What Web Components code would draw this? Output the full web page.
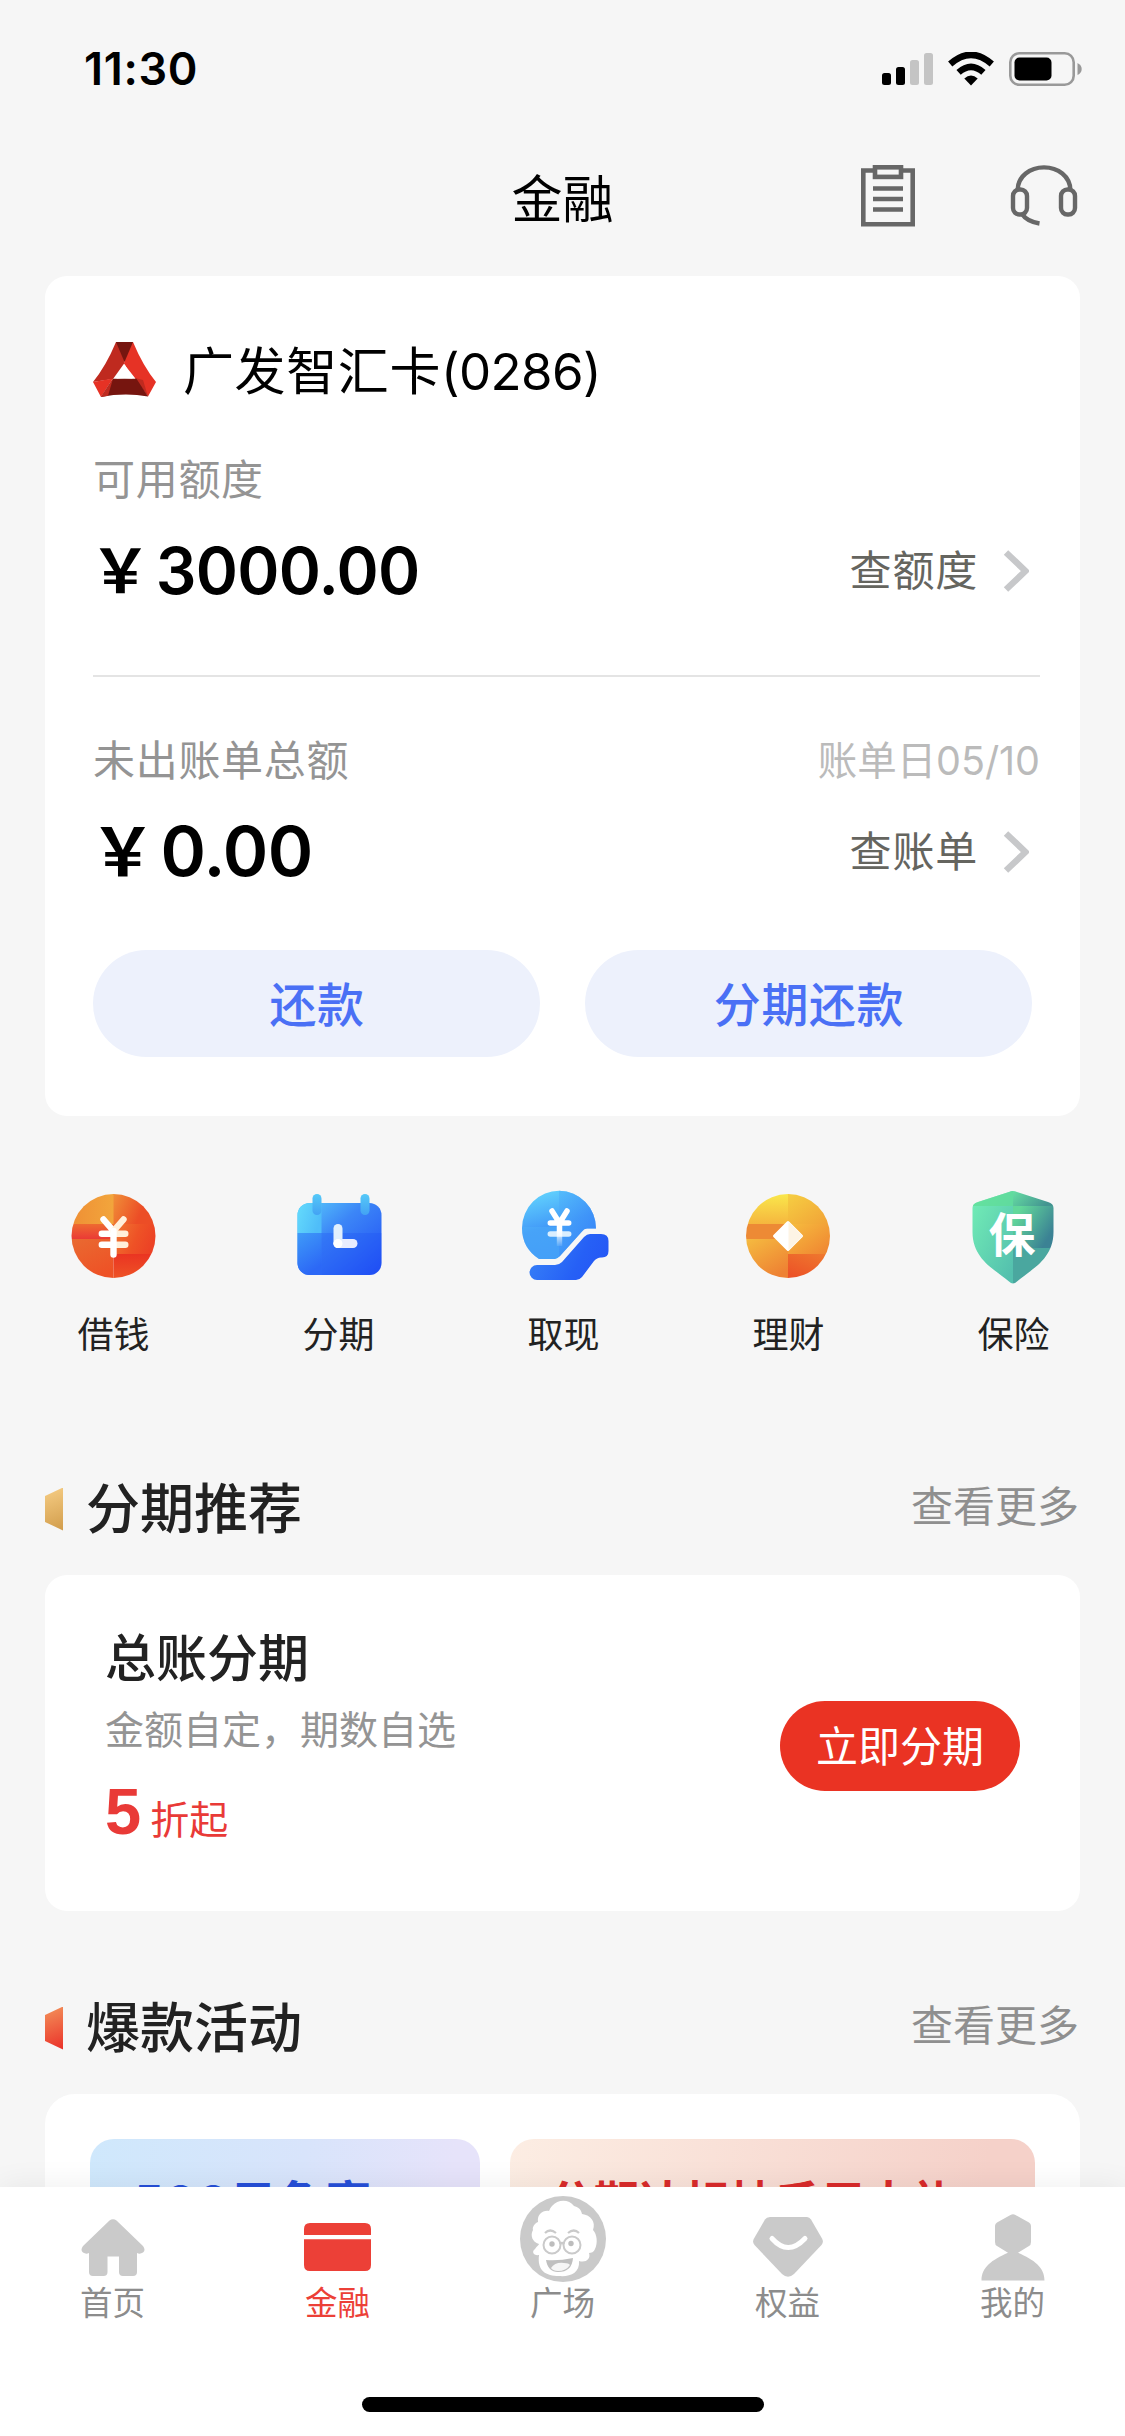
<!DOCTYPE html>
<html lang="zh-CN">
<head>
<meta charset="utf-8">
<title>金融</title>
<style>
html,body{margin:0;padding:0}
body{width:1125px;height:2436px;overflow:hidden;background:#f6f6f6;color:#000;font-family:Inter,"Noto Sans CJK SC",sans-serif;-webkit-font-smoothing:antialiased}
</style>
</head>
<body>
<app-screen></app-screen>
<script>
const define = (name, css, html) => {
  customElements.define(name, class extends HTMLElement {
    connectedCallback() {
      if (this.shadowRoot) return;
      const root = this.attachShadow({ mode: "open" });
      const markup = typeof html === "function" ? html(this) : html;
      root.innerHTML = `<style>:host{display:block;box-sizing:border-box}*{box-sizing:border-box}svg{display:block;flex:none}${css}</style>${markup}`;
    }
  });
};

define("status-bar", `
:host{display:flex;justify-content:space-between;align-items:center;height:138px;padding:0 43px 0 84px}
.time{font-size:45px;font-weight:600;line-height:60px;letter-spacing:.7px}
.right{display:flex;align-items:center;gap:15px}`,
`<span class="time">11:30</span>
<div class="right">
<svg width="51" height="34" viewBox="0 0 51 34"><g><rect y="21" width="9" height="12" rx="2.5"/><rect x="14" y="15" width="9" height="18" rx="2.5"/><rect x="28" y="8" width="9" height="25" rx="2.5" fill="#c4c4c4"/><rect x="42" y="1" width="9" height="32" rx="2.5" fill="#c4c4c4"/></g></svg>
<svg width="46" height="34" viewBox="0 0 46 34"><path d="M23 33.4 16.3 26.4Q23 20.6 29.7 26.4Z"/><path d="M10.6 20.4Q23 9.3 35.4 20.4" fill="none" stroke="#000" stroke-width="6.4"/><path d="M2.2 12Q23-6.4 43.8 12" fill="none" stroke="#000" stroke-width="6.4"/></svg>
<svg width="73" height="34" viewBox="0 0 73 34"><rect x="1.3" y="1.3" width="63.4" height="31.4" rx="9" fill="none" stroke="#999" stroke-width="2.6"/><rect x="5.5" y="5.5" width="37" height="23" rx="5"/><path d="M68.5 11Q72.7 13 72.7 17T68.5 23Z" fill="#999"/></svg>
</div>`);

define("nav-bar", `
:host{display:grid;grid-template-columns:1fr auto 1fr;align-items:center;height:126px;padding:0 47px}
h1{grid-column:2;margin:0;font-size:51px;font-weight:400;line-height:72px;padding-bottom:2px}
.tools{display:flex;justify-content:flex-end;gap:94px;padding-bottom:11px}`,
`<h1>金融</h1>
<div class="tools">
<svg width="56" height="64" viewBox="0 0 56 64" fill="none" stroke="#676767" stroke-width="4.6"><path d="M13 6.5H3.3V60.2H52.7V6.5H43"/><rect x="15" y="3.3" width="26" height="9.6"/><path d="M13 24.5H43M13 35H43M13 45.5H43"/></svg>
<svg width="68" height="62" viewBox="0 0 68 62" fill="none" stroke="#676767" stroke-width="4.4"><path d="M7.6 26C8 12 20 3.4 34 3.4S60 12 60.4 26"/><rect x="3" y="25.5" width="14" height="25" rx="6.5"/><rect x="51" y="25.5" width="14" height="25" rx="6.5"/><path d="M12 50Q17 57.5 29.5 59.5"/></svg>
</div>`);

define("bank-logo", `:host{width:63px;height:55px}`,
`<svg width="63" height="55" viewBox="0 0 63 55"><path d="M23 0H31L31.5 21 20 37 0 40Q13 24 23 0Z" fill="#bf2a1f"/><path d="M40 0H31L31.5 19 31 22 42 36 55 54.5 63 40Q50 24 40 0Z" fill="#e63225"/><path d="M42 36 50 38 55 54.5Z" fill="#bf2a1f"/><path d="M23 0H40L31.5 20Z" fill="#76150f"/><path d="M0 40 20 36.6 8 55Z" fill="#e63225"/><path d="M20 36.8H43.5L55 54.5Q31.5 50.5 8 55Z" fill="#76150f"/><path d="M20 36.8 8 55 15 53.7Z" fill="#bf2a1f"/><path d="M31.5 22 39.5 36.5Q31.5 35.5 23.5 36.5Z" fill="#fff"/></svg>`);

define("more-link", `
:host{display:flex;align-items:center;gap:25px;padding:1px 11px 0 0;color:#65655f;font-size:42px;line-height:60px;letter-spacing:.8px}`,
`<span><slot></slot></span><svg width="26" height="42" viewBox="0 0 26 42"><path d="M3 2.5 22.5 21 3 39.5" fill="none" stroke="#c7c8ca" stroke-width="6.4"/></svg>`);

define("balance-block", `
.label{display:flex;justify-content:space-between;height:60px;line-height:60px;font-size:42px;color:#949494;letter-spacing:.7px}
.note{font-size:39.5px;color:#bbb;letter-spacing:-.05px}
.value{display:flex;justify-content:space-between;align-items:center;height:90px;margin-top:15px}
.amount{font-size:var(--amount,64px);font-weight:600;line-height:93px;letter-spacing:-.7px;display:flex}
.cur{font-size:.95em;width:1em;margin-left:-3px;margin-right:5px;letter-spacing:0;font-weight:600;font-family:"Noto Sans CJK SC",sans-serif;line-height:85px}`,
e => `<div class="label"><span>${e.getAttribute("label")}</span><span class="note">${e.getAttribute("note") || ""}</span></div>
<div class="value"><div class="amount"><span class="cur">￥</span><span>${e.getAttribute("amount")}</span></div><more-link><slot></slot></more-link></div>`);

define("pill-button", `
:host{flex:1;height:107px;border-radius:54px;background:#edf1fc;color:#4a70f5;font-size:47px;font-weight:500;letter-spacing:.6px;text-align:center;line-height:109px;padding-left:1px}`, `<slot></slot>`);

define("account-card", `
:host{margin:0 45px;height:840px;background:#fff;border-radius:22px;padding:60px 40px 0 48px}
.card{display:flex;align-items:center;gap:27px;height:66px;margin-bottom:48px;font-size:51px;letter-spacing:.6px;white-space:nowrap}
.name{line-height:60px;padding-top:5px}
.no{letter-spacing:-.6px}
.line{height:1.5px;background:#e4e4e4;margin:60px 0 54.5px}
.actions{display:flex;gap:45px;margin:54px 8px 0 0}`,
`<div class="card"><bank-logo></bank-logo><div class="name">广发智汇卡<span class="no">(0286)</span></div></div>
<balance-block label="可用额度" amount="3000.00">查额度</balance-block>
<div class="line"></div>
<balance-block label="未出账单总额" note="账单日05/10" amount="0.00" style="--amount:69px">查账单</balance-block>
<div class="actions"><pill-button>还款</pill-button><pill-button>分期还款</pill-button></div>`);

const quickIcons = {
loan: `<defs><clipPath id="c"><circle cx="48.5" cy="48" r="42"/></clipPath><linearGradient id="a"><stop stop-color="#ef8f35"/><stop offset="1" stop-color="#f2a63c"/></linearGradient><linearGradient id="b" x2="1" y2=".3"><stop stop-color="#f09038"/><stop offset=".75" stop-color="#ec4d26"/></linearGradient><linearGradient id="d" x1="0" y1="0" x2="1" y2=".3"><stop stop-color="#f07a32"/><stop offset=".6" stop-color="#ee5226"/><stop offset="1" stop-color="#ec4225"/></linearGradient><linearGradient id="e" x2="0" y2="1"><stop stop-color="#ea3422"/><stop offset="1" stop-color="#ee5426"/></linearGradient><linearGradient id="f" x2=".5" y2="1"><stop stop-color="#e96a31"/><stop offset="1" stop-color="#ee5226"/></linearGradient><linearGradient id="g" x2="0" y2="1"><stop stop-color="#ee6a30"/><stop offset="1" stop-color="#ea3a36"/></linearGradient></defs><g clip-path="url(#c)"><path fill="url(#a)" d="M6 5h43v31H6z"/><path fill="url(#b)" d="M48.500 5H92v31H48.500z"/><path fill="url(#g)" d="M6 36h43v15H6z"/><path fill="url(#d)" d="M48.500 36H92v30H48.500z"/><path fill="url(#f)" d="M6 51h42.500v40H6z"/><path fill="url(#e)" d="M48.500 66H92v25H48.500z"/></g><g transform="translate(-1)" fill="none" stroke="#fff" stroke-width="6.400" stroke-linecap="round"><path d="M39.500 31.500 49.500 43M37.800 45.700H49.500M37.800 56.800H49.500"/><path stroke="#fff0db" d="M59.500 31.500 49.500 43M61.300 45.700H51M61.300 56.800H51"/><path d="M49.500 43V66.500"/></g>`,
plan: `<defs><linearGradient id="a" x1="0" y1="0" x2="1" y2="1"><stop stop-color="#5bd0fb"/><stop offset=".4" stop-color="#3c86f7"/><stop offset="1" stop-color="#1f4bf4"/></linearGradient><linearGradient id="b" x2="1" y2=".4"><stop stop-color="#65dcfc"/><stop offset="1" stop-color="#4fbdf9"/></linearGradient><linearGradient id="c" x2="0" y2="1"><stop stop-color="#55c9f8"/><stop offset="1" stop-color="#43a2f4"/></linearGradient><linearGradient id="d" x2=".4" y2="1"><stop stop-color="#3f9bf8"/><stop offset="1" stop-color="#2c68f6"/></linearGradient><clipPath id="e"><rect x="7.500" y="15" width="84" height="72" rx="12"/></clipPath></defs><g clip-path="url(#e)"><path fill="url(#a)" d="M7 15h85v72H7z"/><path fill="url(#b)" d="M7 15h24.500v30H7z"/><path fill="url(#d)" d="M7 45h24.500v42H7z"/><path fill="#1c50f5" opacity=".28" d="M31.500 45H92v42H31.500z"/></g><rect x="22.500" y="6" width="9" height="21" rx="4.500" fill="url(#c)"/><rect x="70.500" y="6" width="9" height="21" rx="4.500" fill="url(#c)"/><path d="M48 55.500H63" stroke="#e8edfe" stroke-width="9" stroke-linecap="round"/><path d="M48 40.500V55.500" stroke="#e1effd" stroke-width="9" stroke-linecap="round"/><circle cx="48" cy="55.500" r="4.500" fill="#fff"/>`,
cash: `<defs><linearGradient id="a" x1=".3" y1="0" x2=".6" y2="1"><stop stop-color="#62d3fd"/><stop offset=".5" stop-color="#429af8"/><stop offset="1" stop-color="#3d93f8"/></linearGradient><linearGradient id="b" x1="0" y1="0" x2="1" y2="1"><stop stop-color="#4fb4fa"/><stop offset="1" stop-color="#2f74f7"/></linearGradient><linearGradient id="h" x1="0" y1=".5" x2="1" y2=".8"><stop stop-color="#367ff7"/><stop offset=".6" stop-color="#2660f6"/><stop offset="1" stop-color="#2455f5"/></linearGradient><linearGradient id="s" gradientUnits="userSpaceOnUse" x1="0" y1="42" x2="0" y2="58"><stop stop-color="#fff"/><stop offset="1" stop-color="#fff" stop-opacity=".1"/></linearGradient><clipPath id="k"><path d="M24 71Q7 60 7 40A37 37.500 0 0 1 81 40.600H72Q69 40.600 67 43.500L45 68Q42 71 40 71Z"/></clipPath></defs><g clip-path="url(#k)"><path fill="url(#a)" d="M7 2h75v70H7z"/><path fill="url(#b)" opacity=".65" d="M44 2H82V72H44z"/><path fill="#51b5fa" opacity=".35" d="M7 39H44V72H7z"/></g><path d="M22 77H40Q44 77 47 74L69 49Q72 46 75 46H86Q93.500 46 93.500 53V63Q93.500 69.500 87 69.500H86Q82 69.500 79 73L67 89Q64.500 92 61 92H22A7.500 7.500 0 0 1 22 77Z" fill="url(#h)"/><g fill="none" stroke="#fff" stroke-width="5.500" stroke-linecap="round"><path d="M37 23 44.500 35 52 23M35.300 35H53.700M44.500 35V44"/><path stroke="#d9eefe" d="M35.300 46H53.700"/></g><path d="M41.800 43H47.200V58H41.800Z" fill="url(#s)"/>`,
wealth: `<defs><clipPath id="c"><circle cx="48" cy="48" r="42"/></clipPath><linearGradient id="a" x2="0" y2="1"><stop stop-color="#fae94c"/><stop offset="1" stop-color="#f5b63e"/></linearGradient><linearGradient id="b" x2="1" y2="1"><stop stop-color="#f6cf42"/><stop offset="1" stop-color="#f1a137"/></linearGradient><linearGradient id="d" x2="1" y2="1"><stop stop-color="#f6bd3e"/><stop offset="1" stop-color="#ef8231"/></linearGradient><linearGradient id="e" x1=".3" y1="1" x2="1" y2="0"><stop stop-color="#ec5327"/><stop offset="1" stop-color="#ef7b2f"/></linearGradient><linearGradient id="f" x2=".6" y2="1"><stop stop-color="#f5bb40"/><stop offset="1" stop-color="#ee8233"/></linearGradient></defs><g clip-path="url(#c)"><path fill="url(#a)" d="M6 5h42v31H6z"/><path fill="url(#b)" d="M48 5h43v31H48z"/><path fill="#ed8a35" d="M6 36h42v15H6z"/><path fill="url(#d)" d="M48 36h43v30H48z"/><path fill="url(#f)" d="M6 51h42v40H6z"/><path fill="url(#e)" d="M48 66h43v25H48z"/></g><path d="M48 34.500 61.500 48 48 61.500 34.500 48Z" fill="#fff" stroke="#fff" stroke-width="3" stroke-linejoin="round"/><path d="M48.500 34 62.500 48 48.500 62Z" fill="#fdf4e5"/>`,
shield: `<defs><clipPath id="c"><path d="M44 4Q48 2 52 4L83 14Q88.500 15.500 88.500 20V44C88.500 72 65 82 52 93.500Q48 97.500 44 93.500C31 82 7.500 72 7.500 44V20Q7.500 15.500 13 14Z"/></clipPath><linearGradient id="a" x1="0" y1="0" x2=".8" y2="1"><stop stop-color="#74f0b6"/><stop offset="1" stop-color="#54c0ae"/></linearGradient><linearGradient id="b" x1=".2" y1="0" x2="1" y2=".5"><stop stop-color="#62d89a"/><stop offset="1" stop-color="#3b8294"/></linearGradient><linearGradient id="d" x2="1" y2=".4"><stop stop-color="#67e1a3"/><stop offset="1" stop-color="#439491"/></linearGradient></defs><g clip-path="url(#c)"><path fill="url(#a)" d="M7 1H48V98H7z"/><path fill="#5fdd95" opacity=".7" d="M7 1H48V18H7z"/><path fill="url(#b)" d="M48 18H90V60H48z"/><path fill="url(#d)" d="M48 1H90V18H48z"/><path fill="#4aa79f" d="M48 60H90V98H48z"/></g><text x="47" y="64" text-anchor="middle" font-family="Noto Sans CJK SC, sans-serif" font-weight="700" font-size="47" fill="#fff">保</text>`
};
define("quick-entry", `
:host{flex:1;display:flex;flex-direction:column;align-items:center;gap:27px;font-size:36px;line-height:48px;color:#222}
span{padding-left:2px}`,
e => `<svg width="96" height="96" viewBox="0 0 96 96">${quickIcons[e.getAttribute("icon")]}</svg><span><slot></slot></span>`);

define("quick-menu", `:host{display:flex;padding-top:72px}`,
`<quick-entry icon="loan">借钱</quick-entry><quick-entry icon="plan">分期</quick-entry><quick-entry icon="cash">取现</quick-entry><quick-entry icon="wealth">理财</quick-entry><quick-entry icon="shield">保险</quick-entry>`);

define("section-head", `
:host{display:flex;align-items:center;height:66px;margin:0 46px 33px 45px}
.mark{width:18px;height:43px;clip-path:polygon(0 20%,100% 0,100% 100%,0 80%);background:linear-gradient(160deg,var(--from),var(--to));margin-right:23px}
h2{margin:0;flex:1;font-size:54px;line-height:67px;font-weight:500;color:#222}
.more{font-size:42px;line-height:60px;padding-bottom:4px;color:#8f8f8f}`,
`<span class="mark"></span><h2><slot></slot></h2><span class="more">查看更多</span>`);

define("promo-card", `
:host{display:flex;justify-content:space-between;align-items:center;margin:0 45px;height:336px;background:#fff;border-radius:22px;padding:0 60px}
.info{display:flex;flex-direction:column;align-self:flex-start;padding-top:53px}
h3{margin:0;font-size:51px;line-height:62px;font-weight:500;color:#222}
p{margin:16px 0 0;font-size:39px;line-height:48px;color:#949494}
.off{display:flex;align-items:baseline;gap:9px;color:#e93a37;font-size:39px;line-height:60px;margin-top:28px}
b{font:700 65px/60px "Liberation Sans",sans-serif}
.go{width:240px;height:90px;border-radius:45px;background:#ea3323;color:#fff;text-align:center;font-size:42px;line-height:91px;margin-top:6px}`,
`<div class="info"><h3>总账分期</h3><p>金额自定，期数自选</p><div class="off"><b>5</b><span>折起</span></div></div><div class="go">立即分期</div>`);

define("event-banner", `
:host{height:240px;border-radius:24px;padding:38px 38px;font-size:46px;line-height:50px;font-weight:700;white-space:nowrap;overflow:hidden}`, `<slot></slot>`);

define("event-card", `
:host{display:flex;gap:30px;margin:0 45px;height:360px;background:#fff;border-radius:30px;padding:45px}
.a{width:390px;background:linear-gradient(100deg,#cfe8fc,#d8e4fb 50%,#e6e3fa 85%);color:#264fd8;letter-spacing:1.6px;padding-left:44px}
.b{width:525px;background:linear-gradient(100deg,#fcede3,#f5d1c9 85%);color:#d92b2b;letter-spacing:-.6px}`,
`<event-banner class="a">500元免享</event-banner><event-banner class="b">分期达标抽千元大礼</event-banner>`);

const tabIcons = {
home: `<svg width="64" height="60" viewBox="0 0 64 60"><path d="M28.500 2.500Q32 0 35.500 2.500L62 28Q65 32 62 34.500Q59 36.500 56 35V54Q56 58 52 58H42Q38 58 38 54V38.500H26.500V54Q26.500 58 22.500 58H12Q8 58 8 54V35Q5 36.500 2 34.500Q-1 32 2 28Z" fill="#cacaca"/></svg>`,
card: `<svg width="67" height="50" viewBox="0 0 67 50"><path d="M6 1H61Q67 1 67 7V13H0V7Q0 1 6 1ZM0 17.300H67V43Q67 49 61 49H6Q0 49 0 43Z" fill="#ec4037"/></svg>`,
face: `<svg width="86" height="86" viewBox="0 0 86 86"><circle cx="43" cy="43" r="43" fill="#cacaca"/><path d="M32 10C38 3 49 3 54 10C58 11 61 13 62 18C71 19 76 26 73 34C77 38 78 47 75 53C74 56 71 57 69 57C71 63 66 67 59 65C60 77 50 81 39 80C26 80 17 75 19 59C14 60 11 56 15 53C17 50 19 49 19 48C12 46 10 39 13 34C12 31 15 27 18 26C17 18 23 14 29 15Q30 12 32 10Z" fill="#fff"/><g fill="none" stroke="#cacaca"><circle cx="32" cy="49" r="8.500" stroke-width="2"/><circle cx="52" cy="49" r="8.500" stroke-width="2"/><path d="M25 37Q30 32 36 37M48 37Q54 32 59 37M40 48Q42 46 44 48" stroke-width="2.200"/></g><circle cx="32" cy="48" r="2.700" fill="#bdbdbd"/><circle cx="51" cy="47.500" r="2.700" fill="#bdbdbd"/><path d="M26 64Q39 65 53 62Q52 76 38 76Q28 76 26 64Z" fill="#bfbfbf"/><path d="M31 72Q35 66 44 67Q49 67 50 69Q46 75 38 75Q33 75 31 72Z" fill="#f5f5f5"/></svg>`,
gem: `<svg width="70" height="60" viewBox="0 0 70 60"><path d="M17 0H54Q56.500 0 58 2.500L69 21.500Q71 25 68.500 28L41 57Q35 62.500 29 57L1.500 28Q-1 25 1 21.500L12 2.500Q13.500 0 17 0Z" fill="#cacaca"/><path d="M19 21.500Q35 39.500 52 21.500" fill="none" stroke="#fff" stroke-width="5" stroke-linecap="round"/></svg>`,
user: `<svg width="64" height="67" viewBox="0 0 64 67"><path d="M29.500 1Q32 -.4 34.500 1L48 8.500Q50 9.500 50 12V28Q50 31 48 32L37 38.800C53 46 63.500 53 63.500 66.500H.5C.5 53 11 46 27 38.800L16 32Q14 31 14 28V12Q14 9.500 16 8.500Z" fill="#cacaca"/></svg>`
};
define("tab-item", `
:host{flex:1;display:flex;flex-direction:column;align-items:center;font-size:32.500px;line-height:43px;color:#8c8c8c}
:host([active]){color:#ec4037}
.icon{height:95px;display:flex;align-items:flex-end;padding-bottom:var(--lift,1px)}`,
e => `<div class="icon">${tabIcons[e.getAttribute("icon")]}</div><span><slot></slot></span>`);

define("tab-bar", `
:host{display:flex;flex-direction:column;height:249px;background:#fff;box-shadow:0 0 30px rgba(0,0,0,.07);position:relative}
nav{display:flex;flex:1}
.handle{width:402px;height:15px;border-radius:8px;background:#000;align-self:center;margin-bottom:24px}`,
`<nav><tab-item icon="home" style="--lift:4px">首页</tab-item><tab-item icon="card" active style="--lift:10px">金融</tab-item><tab-item icon="face" style="--lift:0px">广场</tab-item><tab-item icon="gem" style="--lift:5px">权益</tab-item><tab-item icon="user">我的</tab-item></nav><div class="handle"></div>`);

define("app-screen", `
:host{display:flex;flex-direction:column;height:2436px}
main{flex:1;min-height:0;overflow:hidden;padding-top:12px}
.first{margin-top:117px}.second{margin-top:84px}`,
`<status-bar></status-bar><nav-bar></nav-bar>
<main><account-card></account-card><quick-menu></quick-menu>
<section-head class="first" style="--from:#f6cd84;--to:#d19c4b">分期推荐</section-head><promo-card></promo-card>
<section-head class="second" style="--from:#f3925a;--to:#ea2f28">爆款活动</section-head><event-card></event-card></main>
<tab-bar></tab-bar>`);
</script>
</body>
</html>
